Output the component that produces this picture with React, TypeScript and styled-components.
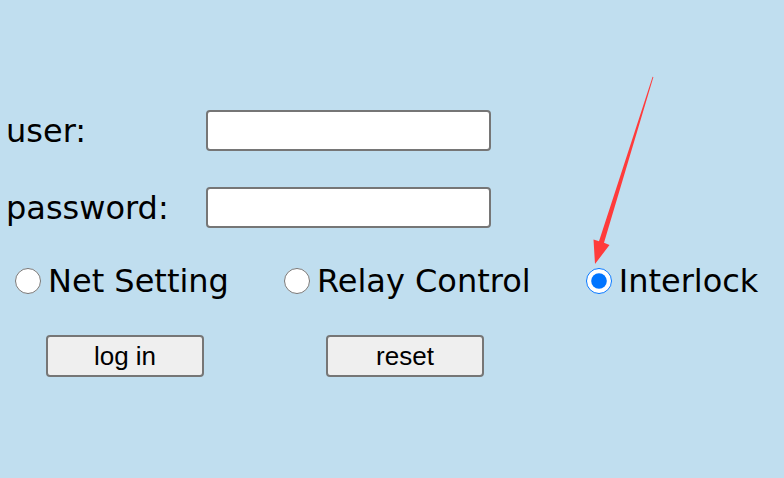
import styled, { createGlobalStyle } from "styled-components";

const GlobalStyle = createGlobalStyle`
  html, body {
    margin: 0;
    padding: 0;
  }
  body {
    background: #c0deef;
    font-family: "DejaVu Sans", Verdana, sans-serif;
    color: #000;
  }
`;

const Page = styled.div`
  position: relative;
  min-height: 478px;
  padding: 110px 0 0 6px;
  box-sizing: border-box;
`;

const FormGrid = styled.div`
  display: grid;
  grid-template-columns: 200px 285px;
  row-gap: 36px;
  align-items: center;
`;

const FieldLabel = styled.label`
  font-size: 32px;
  line-height: 38px;
`;

const TextInput = styled.input`
  box-sizing: border-box;
  width: 285px;
  height: 41px;
  border: 2px solid #767676;
  border-radius: 4px;
  background: #fff;
  padding: 0 6px;
  font-size: 20px;
  outline: none;
`;

const RadioRow = styled.div`
  display: flex;
  align-items: center;
  gap: 55px;
  margin: 34px 0 0 9px;
`;

const RadioOption = styled.label`
  display: flex;
  align-items: center;
  gap: 7px;
  font-size: 32px;
  line-height: 38px;
  white-space: nowrap;
`;

const RadioInput = styled.input`
  width: 26px;
  height: 26px;
  margin: 0;
  accent-color: #0075ff;
`;

const ButtonRow = styled.div`
  display: flex;
  gap: 122px;
  margin: 35px 0 0 40px;
`;

const Button = styled.button`
  box-sizing: border-box;
  width: 158px;
  height: 42px;
  border: 2px solid #767676;
  border-radius: 4px;
  background: #efefef;
  font-family: "Liberation Sans", Arial, sans-serif;
  font-size: 26px;
  color: #000;
  padding: 0;
`;

const ArrowOverlay = styled.svg`
  position: absolute;
  left: 0;
  top: 0;
  pointer-events: none;
`;

export default function App() {
  return (
    <>
      <GlobalStyle />
      <Page>
        <FormGrid>
          <FieldLabel htmlFor="user">user:</FieldLabel>
          <TextInput id="user" type="text" />
          <FieldLabel htmlFor="pwd">password:</FieldLabel>
          <TextInput id="pwd" type="password" />
        </FormGrid>

        <RadioRow>
          <RadioOption>
            <RadioInput type="radio" name="mode" />
            Net Setting
          </RadioOption>
          <RadioOption>
            <RadioInput type="radio" name="mode" />
            Relay Control
          </RadioOption>
          <RadioOption>
            <RadioInput type="radio" name="mode" defaultChecked />
            Interlock
          </RadioOption>
        </RadioRow>

        <ButtonRow>
          <Button>log in</Button>
          <Button>reset</Button>
        </ButtonRow>

        <ArrowOverlay width="784" height="478" viewBox="0 0 784 478">
          <polygon
            fill="#ff3b3b"
            points="653.4,77 604,242.7 609.5,245 595,264 593.5,239.5 599,241.3 652.6,76.8"
          />
        </ArrowOverlay>
      </Page>
    </>
  );
}
